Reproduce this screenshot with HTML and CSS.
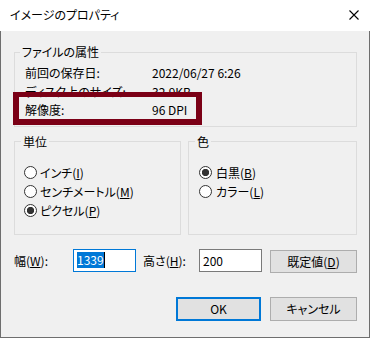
FILE: index.html
```html
<!DOCTYPE html>
<html lang="ja">
<head>
<meta charset="utf-8">
<title>イメージのプロパティ</title>
<link rel="stylesheet" href="styles.css">
</head>
<body>
<div class="window">
  <div class="titlebar">
    <span class="title">イメージのプロパティ</span>
    <svg class="close" width="10" height="10" viewBox="0 0 10 10"><path d="M0.5 0.5 L9.5 9.5 M9.5 0.5 L0.5 9.5" stroke="#000" stroke-width="1.1" fill="none"/></svg>
  </div>
  <div class="content">
    <fieldset class="group attrs">
      <legend>ファイルの属性</legend>
      <div class="row"><span class="key">前回の保存日:</span><span>2022/06/27 6:26</span></div>
      <div class="row"><span class="key">ディスク上のサイズ:</span><span>32.9KB</span></div>
      <div class="row highlight"><span class="key">解像度:</span><span>96 DPI</span></div>
    </fieldset>
    <div class="groups">
      <fieldset class="group unit">
        <legend>単位</legend>
        <label class="radio"><span class="dot"></span>インチ(<u>I</u>)</label>
        <label class="radio"><span class="dot"></span>センチメートル(<u>M</u>)</label>
        <label class="radio"><span class="dot on"></span>ピクセル(<u>P</u>)</label>
      </fieldset>
      <fieldset class="group color">
        <legend>色</legend>
        <label class="radio"><span class="dot on"></span>白黒(<u>B</u>)</label>
        <label class="radio"><span class="dot"></span>カラー(<u>L</u>)</label>
      </fieldset>
    </div>
    <div class="size-row">
      <span class="lbl w">幅(<u>W</u>):</span>
      <div class="textbox focused"><span class="sel">1339</span><span class="caret"></span></div>
      <span class="lbl h">高さ(<u>H</u>):</span>
      <div class="textbox">200</div>
      <button class="btn def">既定値(<u>D</u>)</button>
    </div>
    <div class="buttons">
      <button class="btn ok">OK</button>
      <button class="btn cancel">キャンセル</button>
    </div>
  </div>
</div>
</body>
</html>
```
FILE: styles.css
```css
*, *::before, *::after { box-sizing: border-box; }
html, body { margin: 0; padding: 0; }
body {
  background: #f0f0f0;
  font-family: "Noto Sans CJK JP", "Noto Sans", sans-serif;
  font-feature-settings: "palt";
  font-size: 12px;
  color: #000;
}
.window { width: 370px; height: 338px; display: flex; flex-direction: column; }
.titlebar {
  height: 31px;
  background: #fff;
  display: flex;
  align-items: center;
  justify-content: space-between;
  padding: 0 11px 1px 10px;
}
.title { font-size: 12px; line-height: 16px; }
.close { display: block; }
.content {
  flex: 1;
  background: #f0f0f0;
  border-left: 1px solid #6e6e6e;
  border-right: 1px solid #6e6e6e;
  border-bottom: 1px solid #6e6e6e;
  padding: 13px 12px 0 13px;
}
.group {
  margin: 0;
  border: 1px solid #dcdcdc;
  padding: 0;
  min-width: 0;
}
.group legend {
  padding: 0 2px;
  line-height: 16px;
}
.attrs { padding: 4px 0 6px 10px; }
.attrs legend { margin-left: -5px; }
.row { display: flex; line-height: 18.5px; height: 18.5px; }
.key { width: 127px; flex: none; }
.highlight { position: relative; }
.highlight::after {
  content: "";
  position: absolute;
  left: -12px;
  top: -9px;
  width: 189px;
  height: 33px;
  border: 6px solid #7b0016;
  border-top-width: 5px;
}
.groups { display: flex; gap: 7px; margin-top: 7px; }
.unit { width: 167px; padding: 13px 0 14px 9px; }
.unit legend { margin-left: -3px; }
.color { width: 169px; padding: 13px 0 14px 10px; }
.color legend { margin-left: -4px; }
.radio { display: flex; align-items: center; height: 19px; }
.dot {
  width: 13px; height: 13px;
  border: 1px solid #333;
  border-radius: 50%;
  background: #fff;
  margin-right: 3px;
  flex: none;
}
.color .dot { margin-right: 4px; }
.dot.on { background: radial-gradient(circle, #333 0 3.4px, #fff 3.9px); }
.size-row { display: flex; align-items: center; margin-top: 14px; height: 23px; }
.lbl.w { width: 59px; }
.lbl.h { width: 56px; margin-left: 7px; }
.textbox {
  width: 63px; height: 23px;
  background: #fff;
  border: 1px solid #7a7a7a;
  padding: 0 3px;
  display: flex;
  align-items: center;
  font-size: 12px;
}
.textbox.focused { border-color: #0078d7; }
.sel { background: #0078d7; color: #fff; line-height: 16px; }
.caret { width: 1px; height: 16px; background: #000; }
.btn {
  font: inherit;
  font-feature-settings: "palt";
  color: #000;
  background: #e1e1e1;
  border: 1px solid #adadad;
  height: 23px;
  padding: 0;
  margin: 0;
}
.def { width: 87px; margin-left: 8px; margin-top: 2px; }
.buttons { display: flex; justify-content: flex-end; gap: 9px; margin-top: 25px; }
.ok { width: 85px; height: 24px; border: 2px solid #0078d7; }
.cancel { width: 87px; height: 24px; }
```
